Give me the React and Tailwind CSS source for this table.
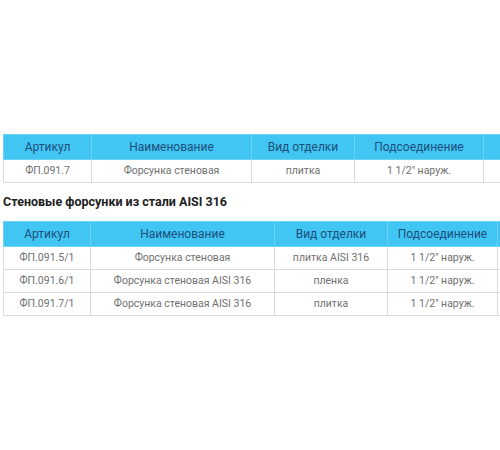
import React from 'react';

const HEAD = ['Артикул', 'Наименование', 'Вид отделки', 'Подсоединение', ''];

const TABLES = [
    {
        width: 'w-[600px]',
        widths: ['w-[88px]', 'w-[160px]', 'w-[103px]', 'w-[129px]', 'w-[120px]'],
        rows: [['ФП.091.7', 'Форсунка стеновая', 'плитка', '1 1/2" наруж.', '']],
    },
    {
        width: 'w-[614px]',
        widths: ['w-[87px]', 'w-[184px]', 'w-[113px]', 'w-[110px]', 'w-[120px]'],
        rows: [
            ['ФП.091.5/1', 'Форсунка стеновая', 'плитка AISI 316', '1 1/2" наруж.', ''],
            ['ФП.091.6/1', 'Форсунка стеновая AISI 316', 'пленка', '1 1/2" наруж.', ''],
            ['ФП.091.7/1', 'Форсунка стеновая AISI 316', 'плитка', '1 1/2" наруж.', ''],
        ],
    },
];

const Table = ({ width, widths, rows }) => (
    <table className={`table-fixed border-collapse ${width}`}>
        <colgroup>
            {widths.map((w, i) => (
                <col key={i} className={w} />
            ))}
        </colgroup>
        <thead>
            <tr className="h-[25px] bg-[#41c6f3]">
                {HEAD.map((h, i) => (
                    <th key={i} className="border border-[#6dd3f6] text-[12px] font-normal text-[#1d4f7c] text-center whitespace-nowrap">
                        {h}
                    </th>
                ))}
            </tr>
        </thead>
        <tbody>
            {rows.map((r, i) => (
                <tr key={i} className="h-[23px]">
                    {r.map((c, j) => (
                        <td key={j} className="border border-[#dcdcdc] text-[10.5px] text-[#707070] text-center whitespace-nowrap">
                            {c}
                        </td>
                    ))}
                </tr>
            ))}
        </tbody>
    </table>
);

export default function App() {
    return (
        <div className="w-[500px] h-[450px] bg-white overflow-hidden pl-[3px] pt-[134px]" style={{ fontFamily: 'Roboto, "Liberation Sans", sans-serif' }}>
            <Table {...TABLES[0]} />
            <h3 className="mt-[10px] mb-[10px] text-[12.5px] font-bold text-[#222] leading-[18px]">
                Стеновые форсунки из стали AISI 316
            </h3>
            <Table {...TABLES[1]} />
        </div>
    );
}
